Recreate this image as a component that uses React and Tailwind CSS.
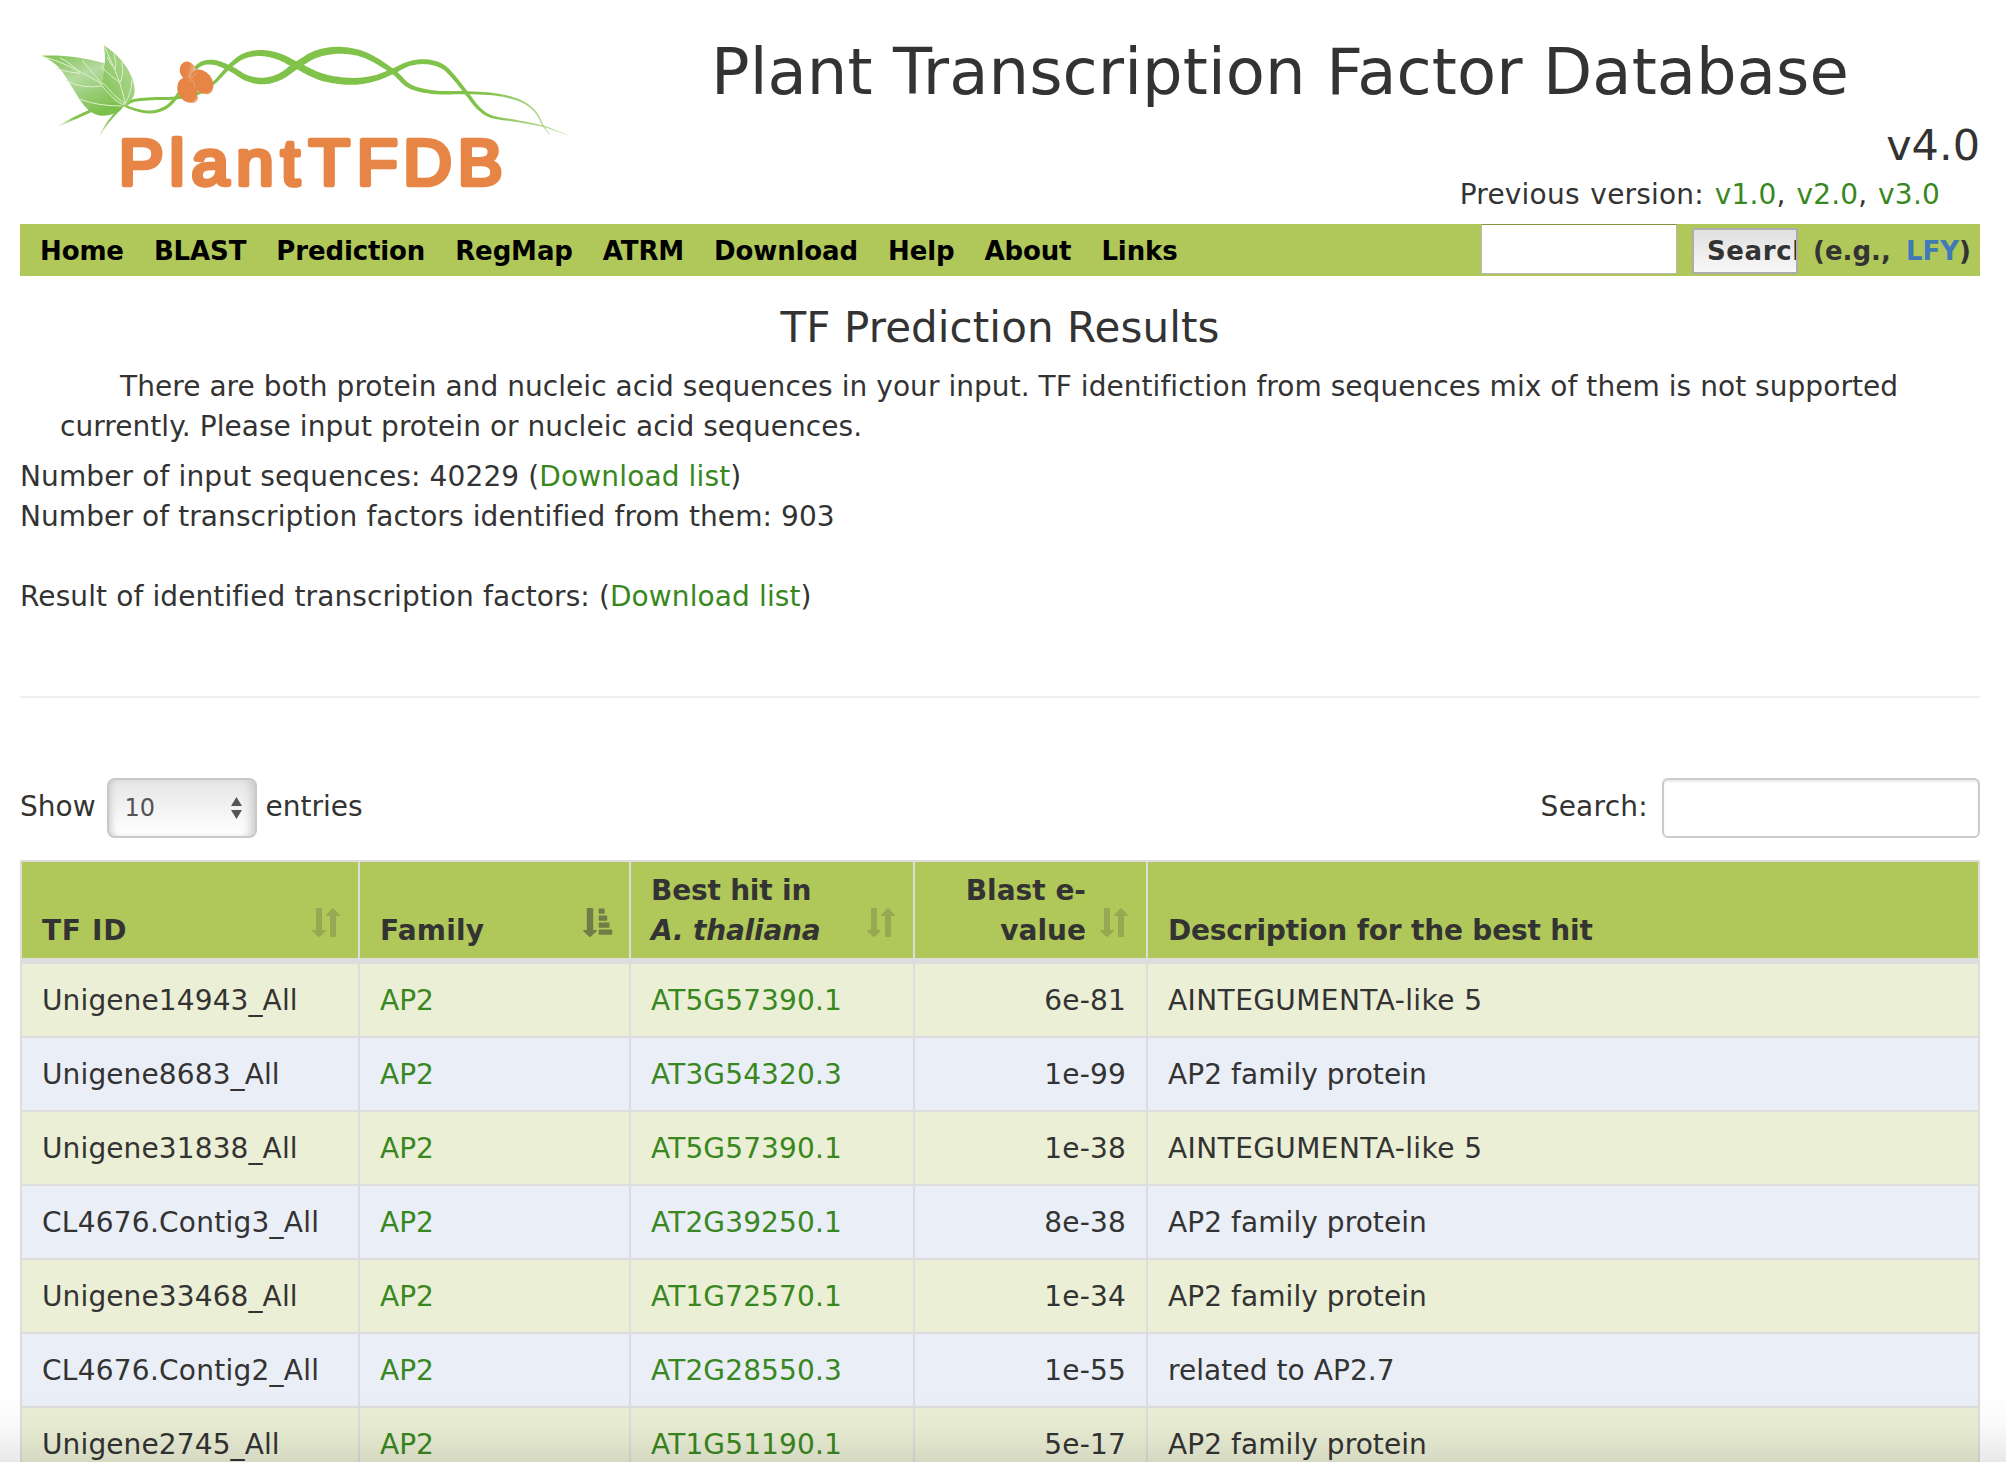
const rows = [
  ['Unigene14943_All', 'AT5G57390.1', '6e-81', 'AINTEGUMENTA-like 5'],
  ['Unigene8683_All', 'AT3G54320.3', '1e-99', 'AP2 family protein'],
  ['Unigene31838_All', 'AT5G57390.1', '1e-38', 'AINTEGUMENTA-like 5'],
  ['CL4676.Contig3_All', 'AT2G39250.1', '8e-38', 'AP2 family protein'],
  ['Unigene33468_All', 'AT1G72570.1', '1e-34', 'AP2 family protein'],
  ['CL4676.Contig2_All', 'AT2G28550.3', '1e-55', 'related to AP2.7'],
  ['Unigene2745_All', 'AT1G51190.1', '5e-17', 'AP2 family protein'],
];

const nav = ['Home', 'BLAST', 'Prediction', 'RegMap', 'ATRM', 'Download', 'Help', 'About', 'Links'];

// Builds a closed outline around a smooth curve whose width changes along the way.
function ribbon(pts) {
  const left = [];
  const right = [];
  const at = (i) => pts[Math.max(0, Math.min(pts.length - 1, i))];
  for (let i = 0; i < pts.length - 1; i++) {
    const [a, b, c, d] = [at(i - 1), at(i), at(i + 1), at(i + 2)];
    for (let s = 0; s <= 12; s++) {
      const t = s / 12;
      const f = (k) => 0.5 * (2 * b[k] + (c[k] - a[k]) * t + (2 * a[k] - 5 * b[k] + 4 * c[k] - d[k]) * t * t + (3 * b[k] - a[k] - 3 * c[k] + d[k]) * t * t * t);
      const g = (k) => 0.5 * (c[k] - a[k] + 2 * (2 * a[k] - 5 * b[k] + 4 * c[k] - d[k]) * t + 3 * (3 * b[k] - a[k] - 3 * c[k] + d[k]) * t * t);
      const dx = g(0);
      const dy = g(1);
      const n = Math.hypot(dx, dy) || 1;
      const w = (b[2] + (c[2] - b[2]) * t) / 2;
      left.push(`${(f(0) - (dy / n) * w).toFixed(1)} ${(f(1) + (dx / n) * w).toFixed(1)}`);
      right.push(`${(f(0) + (dy / n) * w).toFixed(1)} ${(f(1) - (dx / n) * w).toFixed(1)}`);
    }
  }
  return `M${left.join('L')}L${right.reverse().join('L')}Z`;
}

const strandA = ribbon([[312, 226, 6], [350, 240, 8], [395, 246, 9], [438, 232, 10], [470, 200, 10], [500, 150, 10], [538, 105, 12], [580, 97, 15], [630, 115, 16], [680, 144, 18], [730, 153, 20], [780, 140, 20], [830, 106, 21], [890, 72, 22], [962, 61, 21], [1037, 76, 18], [1118, 124, 15], [1170, 169, 13], [1245, 187, 11], [1340, 188, 9], [1430, 194, 7], [1500, 212, 6], [1545, 244, 5], [1570, 288, 4], [1590, 315, 1]]);
const strandB = ribbon([[318, 222, 10], [345, 211, 9], [400, 206, 9], [465, 204, 9], [535, 190, 9], [580, 160, 9], [630, 108, 12], [670, 79, 16], [720, 69, 18], [775, 79, 20], [830, 106, 21], [905, 141, 22], [990, 154, 21], [1060, 146, 18], [1118, 124, 16], [1165, 102, 14], [1215, 95, 15], [1265, 108, 14], [1300, 140, 12], [1340, 190, 11], [1375, 234, 10], [1415, 260, 8], [1490, 273, 6], [1570, 289, 4], [1610, 303, 3], [1646, 317, 1]]);

function Logo() {
  return (
    <svg className="block h-[180px] w-[560px]" viewBox="0 0 1680 540">
      <defs>
        <linearGradient id="leaf" x1="0" y1="0" x2="0.6" y2="1">
          <stop offset="0" stopColor="#7cc04c" />
          <stop offset="0.45" stopColor="#b5daa0" />
          <stop offset="1" stopColor="#7cc04c" />
        </linearGradient>
        <linearGradient id="leaf2" x1="1" y1="0" x2="0" y2="1">
          <stop offset="0" stopColor="#b9dca2" />
          <stop offset="1" stopColor="#80c250" />
        </linearGradient>
        <linearGradient id="petal" x1="0.2" y1="0.2" x2="0.9" y2="0.9">
          <stop offset="0.4" stopColor="#e78547" />
          <stop offset="1" stopColor="#f5cfb8" />
        </linearGradient>
        <linearGradient id="stemFade" x1="0" y1="1" x2="1" y2="0">
          <stop offset="0" stopColor="#80c24a" stopOpacity="0.15" />
          <stop offset="0.5" stopColor="#80c24a" />
        </linearGradient>
        <linearGradient id="strand" gradientUnits="userSpaceOnUse" x1="1400" y1="0" x2="1650" y2="0">
          <stop offset="0" stopColor="#80c24a" />
          <stop offset="1" stopColor="#80c24a" stopOpacity="0.4" />
        </linearGradient>
      </defs>
      <path d="M110 291Q155 262 212 238L220 244Q160 272 110 291Z" fill="url(#stemFade)" />
      <path d="M236 325Q250 280 300 232L306 236Q262 275 236 325Z" fill="url(#stemFade)" />
      <path d={strandA} fill="url(#strand)" />
      <path d={strandB} fill="url(#strand)" />
      <path d="M64 77C120 74 185 80 255 100C300 130 318 170 314 226C296 250 262 262 236 256C190 246 165 180 130 130C112 104 92 88 64 77Z" fill="url(#leaf)" />
      <path d="M251 45C290 70 340 120 344 178C345 202 332 216 314 226C282 224 252 200 249 165C247 130 262 100 251 45Z" fill="url(#leaf2)" />
      <g fill="none" stroke="#dff0cf" strokeWidth="3" strokeLinecap="round">
        <path d="M68 79C140 100 190 130 240 158C262 190 285 212 312 226" />
        <path d="M110 116Q145 128 180 130Q160 104 122 84M138 152Q190 178 244 168M182 208Q232 228 304 228M246 160Q216 130 188 92M252 105Q240 110 250 120" />
        <path d="M254 50C280 110 306 160 315 222M262 82Q272 104 286 118Q290 104 282 74M252 118Q274 140 300 158Q312 138 306 98M250 160Q280 196 314 222Q334 192 336 150" />
      </g>
      <ellipse cx="562" cy="172" rx="18" ry="22" fill="#f4c8ac" />
      <ellipse cx="516" cy="203" rx="18" ry="16" fill="#eca67b" />
      <ellipse cx="504" cy="123" rx="24" ry="29" transform="rotate(-25 504 123)" fill="url(#petal)" />
      <ellipse cx="546" cy="155" rx="30" ry="40" transform="rotate(-38 546 155)" fill="#e78547" />
      <ellipse cx="502" cy="180" rx="29" ry="38" transform="rotate(-20 502 180)" fill="#e78547" />
      <path d="M512 146L530 128M508 150C520 148 524 160 524 172" fill="none" stroke="#f0b48f" strokeWidth="3" opacity="0.7" />
      <text
        transform="scale(1.05 1)"
        x="282 427 490 618 746 825 962 1095 1251"
        y="466"
        fontSize="192"
        fontFamily="Liberation Sans, Arial, sans-serif"
        fill="#e78547"
        stroke="#e78547"
        strokeWidth="14"
        strokeLinejoin="round"
      >
        PlantTFDB
      </text>
    </svg>
  );
}

function SortIcon({ active }) {
  return active ? (
    <svg className="h-[29px] w-[30px] fill-[#333] opacity-50" viewBox="0 0 30 29">
      <path d="M4.6 0h4.8q.8 0 .8.8V22h3q1 .3.4 1.2L8 28.6q-1 .8-2 0L.4 23.2Q-.2 22.3.8 22h3V.8q0-.8.8-.8z" />
      <rect x="15.7" y="0.6" width="6" height="5.2" rx="1" />
      <rect x="15.7" y="7.5" width="8.5" height="5.2" rx="1" />
      <rect x="15.7" y="14.5" width="10.8" height="5.2" rx="1" />
      <rect x="15.7" y="21.5" width="13.5" height="5.2" rx="1" />
    </svg>
  ) : (
    <svg className="h-[29px] w-[28px] fill-[#333] opacity-20" viewBox="0 0 28 29">
      <path d="M4.8 0h4.4q.8 0 .8.8V22h3.2q1 .3.4 1.2L8 28.6q-1 .8-2 0L.4 23.2Q-.2 22.3.8 22H4V.8q0-.8.8-.8z" />
      <path d="M18.8 29h4.4q.8 0 .8-.8V8h3.2q1-.3.4-1.2L22 .8q-1-.8-2 0l-5.600 6Q13.800 7.700 14.800 8H18v20.200q0 .8.8.8z" />
    </svg>
  );
}

function Th({ children, right, sort, className = '' }) {
  return (
    <th className={`relative border-2 border-b-[6px] border-[#ddd] pb-[7px] pt-[9px] pl-5 align-bottom font-bold ${right ? 'pr-[60px] text-right' : 'pr-5 text-left'} ${className}`}>
      {children}
      {sort && (
        <span className={`absolute bottom-[21px] ${sort === 'active' ? 'right-4' : 'right-[18px]'}`}>
          <SortIcon active={sort === 'active'} />
        </span>
      )}
    </th>
  );
}

const idTracking = (id) => (id.startsWith('CL') ? 'tracking-[0.25px]' : 'tracking-[0.12px]');
const descTracking = (d) => (d.startsWith('AIN') ? 'tracking-[0.42px]' : 'tracking-[0.07px]');

export default function App() {
  return (
    <div className="relative h-[1462px] w-[2006px] overflow-hidden bg-white pl-5 pr-[26px] font-['DejaVu_Sans',Verdana,sans-serif] text-[28px] leading-[40px] text-[#333]">
      <header className="flex h-[224px] justify-between">
        <div className="pt-[30px]">
          <Logo />
        </div>
        <div className="flex w-[1269px] flex-col">
          <h1 className="mt-[37px] whitespace-nowrap text-[64px] leading-[70px] tracking-[0.08px]">Plant Transcription Factor Database</h1>
          <div className="mt-[13px] text-right text-[43px] leading-[50px]">v4.0</div>
          <div className="mt-[5px] pr-10 text-right tracking-[0.2px] [word-spacing:1.6px]">
            Previous version: <a className="text-[#398721]">v1.0</a>, <a className="text-[#398721]">v2.0</a>, <a className="text-[#398721]">v3.0</a>
          </div>
        </div>
      </header>

      <nav className="flex h-[52px] items-center bg-[#b0c75a] pl-5 text-[26px] font-bold text-black">
        <div className="flex gap-[30px] pt-[2px] tracking-[-0.12px]">
          {nav.map((n) => (
            <a key={n}>{n}</a>
          ))}
        </div>
        <div className="ml-auto flex h-full items-start text-[#333]">
          <div className="h-[50px] w-[196px] border border-[#b8b8b8] border-t-[#84943f] bg-white" />
          <div className="ml-[15px] mt-1 h-[46px] w-[106px] overflow-hidden border-2 border-[#adadad] bg-linear-to-b from-[#e0e0e0] to-[#f8f8f8] pl-[13px] leading-[42px] tracking-[0.6px]">Search</div>
          <div className="ml-[15px] flex w-[167px] justify-between pr-[9px] leading-[54px]">
            <span>(e.g.,</span>
            <span>
              <a className="text-[#4078b8]">LFY</a>)
            </span>
          </div>
        </div>
      </nav>

      <h2 className="mt-[27px] text-center text-[42px] leading-[50px] tracking-[0.1px]">TF Prediction Results</h2>
      <p className="mt-[14px] whitespace-nowrap px-10 indent-[60px] tracking-[0.05px]">
        There are both protein and nucleic acid sequences in your input. TF identifiction from sequences mix of them is not supported
        <br />
        currently. Please input protein or nucleic acid sequences.
      </p>
      <div className="mt-[10px] tracking-[0.13px]">
        Number of input sequences: 40229 (<a className="text-[#398721]">Download list</a>)
      </div>
      <div className="tracking-[0.09px]">Number of transcription factors identified from them: 903</div>
      <div className="mt-10 tracking-[0.11px]">
        Result of identified transcription factors: (<a className="text-[#398721]">Download list</a>)
      </div>
      <hr className="mt-[79px] border-t-2 border-[#eee]" />

      <div className="mt-[80px] flex h-[60px] items-center justify-between">
        <div className="flex items-center">
          <span className="pb-[2px]">Show</span>
          <div className="ml-[11px] flex h-[60px] w-[150px] items-center justify-between rounded-lg border-2 border-[#c8c8c8] bg-linear-to-b from-[#e6e6e6] to-white pl-4 pr-[13px] text-[24px] text-[#555] shadow-[inset_-8px_0_8px_-4px_#ccc,inset_6px_0_6px_-4px_#ccc]">
            10
            <svg className="h-[22px] w-[11px] fill-[#555]" viewBox="0 0 11 22">
              <path d="M5.5 0L11 9H0zM5.5 22L11 13H0z" />
            </svg>
          </div>
          <span className="ml-[9px] pb-[2px]">entries</span>
        </div>
        <div className="flex items-center">
          <span className="pb-[2px] tracking-[0.25px]">Search:</span>
          <div className="ml-[14px] h-[60px] w-[318px] rounded-md border-2 border-[#ccc] shadow-[inset_0_2px_2px_rgba(0,0,0,0.075)]" />
        </div>
      </div>

      <table className="mt-[22px] w-[1960px] table-fixed border-collapse">
        <colgroup>
          <col className="w-[338px]" />
          <col className="w-[271px]" />
          <col className="w-[284px]" />
          <col className="w-[233px]" />
          <col />
        </colgroup>
        <thead>
          <tr className="h-[100px] bg-[#b0c75a]">
            <Th sort="both" className="tracking-[0.7px]">TF ID</Th>
            <Th sort="active" className="tracking-[0.2px]">Family</Th>
            <Th sort="both" className="tracking-[-0.2px]">
              Best hit in
              <br />
              <i>A. thaliana</i>
            </Th>
            <Th sort="both" right>
              Blast e-
              <br />
              value
            </Th>
            <Th className="tracking-[-0.18px]">Description for the best hit</Th>
          </tr>
        </thead>
        <tbody>
          {rows.map(([id, hit, e, desc]) => (
            <tr key={id} className="h-[74px] first:h-[76px] odd:bg-[#ebefd5] even:bg-[#eaeef6]">
              <td className={`border-2 border-[#ddd] px-5 pt-[2px] ${idTracking(id)}`}>{id}</td>
              <td className="border-2 border-[#ddd] px-5 pt-[2px] text-[#398721]">AP2</td>
              <td className="border-2 border-[#ddd] px-5 pt-[2px] tracking-[0.15px] text-[#398721]">{hit}</td>
              <td className="border-2 border-[#ddd] px-5 pt-[2px] text-right tracking-[0.2px]">{e}</td>
              <td className={`border-2 border-[#ddd] px-5 pt-[2px] ${descTracking(desc)}`}>{desc}</td>
            </tr>
          ))}
        </tbody>
      </table>
      <div className="pointer-events-none absolute inset-x-0 bottom-0 h-[70px] bg-linear-to-b from-transparent via-black/[0.025] to-black/[0.09]" />
    </div>
  );
}
